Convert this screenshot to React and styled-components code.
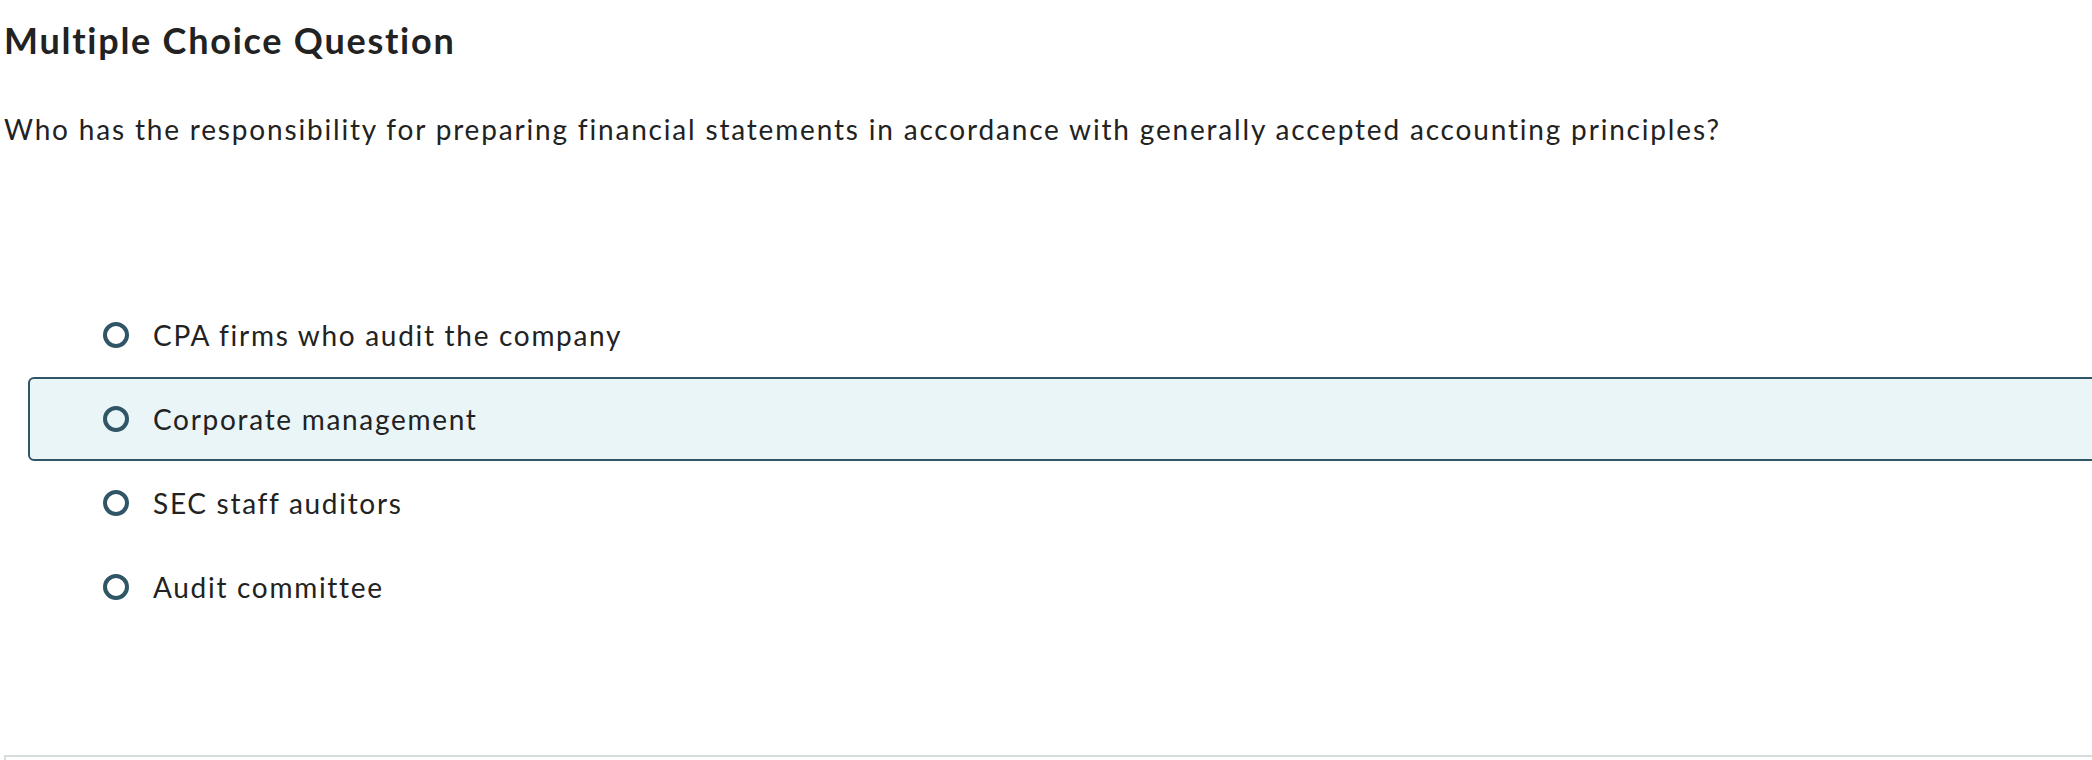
import styled, { createGlobalStyle } from 'styled-components'

const GlobalStyle = createGlobalStyle`
    html, body {
        margin: 0;
        padding: 0;
        background: #ffffff;
        overflow: hidden;
    }
    body {
        font-family: "Lato", "Liberation Sans", sans-serif;
        color: #222222;
    }
`

const Page = styled.div`
    padding: 0 0 0 4px;
    display: flex;
    flex-direction: column;
`

const Title = styled.h2`
    margin: 18px 0 0 0;
    font-size: 36px;
    line-height: 44px;
    font-weight: 700;
    letter-spacing: 1.75px;
    color: #222222;
`

const Prompt = styled.p`
    margin: 49px 0 0 0;
    font-size: 28px;
    line-height: 36px;
    letter-spacing: 1.82px;
    color: #222222;
`

const Choices = styled.div`
    margin: 146px -40px 0 24px;
    display: flex;
    flex-direction: column;
`

const Choice = styled.label`
    display: flex;
    align-items: center;
    gap: 24px;
    height: 84px;
    box-sizing: border-box;
    padding-left: 73px;
    border: 2px solid ${props => (props.$active ? '#2f5566' : 'transparent')};
    border-radius: 6px;
    background: ${props => (props.$active ? '#eaf5f7' : 'transparent')};
    font-size: 28px;
    letter-spacing: 1.7px;
    color: #222222;
    cursor: pointer;
`

const Radio = styled.span`
    width: 26px;
    height: 26px;
    box-sizing: border-box;
    border: 4px solid #2f5566;
    border-radius: 50%;
    flex-shrink: 0;
`

const Footer = styled.div`
    margin-top: 126px;
    height: 5px;
    border-top: 2px solid #d5dadd;
    border-left: 2px solid #d5dadd;
`

const options = [
    'CPA firms who audit the company',
    'Corporate management',
    'SEC staff auditors',
    'Audit committee',
]

function App() {
    return (
        <>
            <GlobalStyle />
            <Page>
                <Title>Multiple Choice Question</Title>
                <Prompt>Who has the responsibility for preparing financial statements in accordance with generally accepted accounting principles?</Prompt>
                <Choices>
                    {options.map((opt, i) => (
                        <Choice key={opt} $active={i === 1}>
                            <Radio />
                            {opt}
                        </Choice>
                    ))}
                </Choices>
                <Footer />
            </Page>
        </>
    )
}

export default App
